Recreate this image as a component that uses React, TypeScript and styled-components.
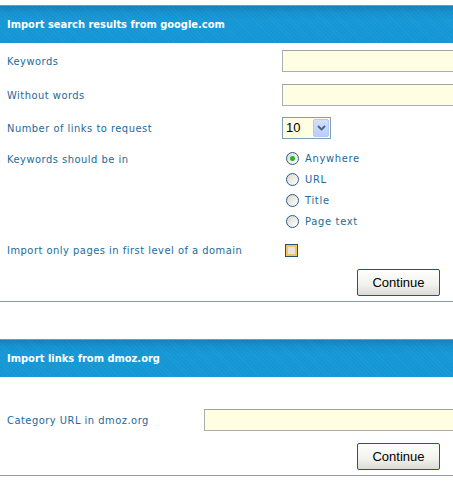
import React from 'react'
import styled, { createGlobalStyle } from 'styled-components'

const GlobalStyle = createGlobalStyle`
  body {
    margin: 0;
    background: #fff;
    overflow: hidden;
  }
`

const linkOptions = ['Anywhere', 'URL', 'Title', 'Page text']

export default function App () {
  return (
    <Page>
      <GlobalStyle />
      <Panel>
        <Header>Import search results from google.com</Header>
        <Body $top={1}>
          <Row $label={275} $h={34}>
            <Label>Keywords</Label>
            <TextInput />
          </Row>
          <Row $label={275} $h={34}>
            <Label>Without words</Label>
            <TextInput />
          </Row>
          <Row $label={275} $h={32}>
            <Label>Number of links to request</Label>
            <SelectBox>
              <SelectValue>10</SelectValue>
              <SelectArrow>
                <svg width='9' height='6' viewBox='0 0 9 6'>
                  <path d='M1 1 L4.5 4.5 L8 1' fill='none' stroke='#4d6185' strokeWidth='1.8' />
                </svg>
              </SelectArrow>
            </SelectBox>
          </Row>
          <Row $label={275} $h={88} $top>
            <Label $pad={5}>Keywords should be in</Label>
            <RadioGroup>
              {linkOptions.map((opt, i) => (
                <RadioOption key={opt}>
                  <Radio $checked={i === 0} />
                  <span>{opt}</span>
                </RadioOption>
              ))}
            </RadioGroup>
          </Row>
          <Row $label={275} $h={36}>
            <Label>Import only pages in first level of a domain</Label>
            <Checkbox />
          </Row>
        </Body>
        <Footer $top={1}>
          <Button>Continue</Button>
        </Footer>
      </Panel>

      <Panel>
        <Header>Import links from dmoz.org</Header>
        <Body $top={26}>
          <Row $label={197} $h={34}>
            <Label>Category URL in dmoz.org</Label>
            <TextInput />
          </Row>
        </Body>
        <Footer $top={6}>
          <Button>Continue</Button>
        </Footer>
      </Panel>
    </Page>
  )
}

const Page = styled.div`
  width: 453px;
  overflow: hidden;
  padding-top: 5px;
`

const Panel = styled.section`
  border-bottom: 1px solid #8d99a6;
  & + & {
    margin-top: 37px;
  }
`

const Header = styled.h2`
  margin: 0;
  height: 37px;
  line-height: 37px;
  padding: 0 7px;
  border-top: 1px solid #8594a3;
  color: #fff;
  font-family: 'DejaVu Sans Condensed', 'DejaVu Sans', Verdana, sans-serif;
  font-size: 11px;
  font-weight: 700;
  white-space: nowrap;
  background:
    repeating-linear-gradient(45deg, rgba(255, 255, 255, 0.035) 0 1px, transparent 1px 3px),
    linear-gradient(#167fbb 0, #1490cd 6px, #1598d5 14px, #1396d3 100%);
`

const Body = styled.div`
  padding-top: ${p => p.$top}px;
`

const Row = styled.div`
  display: grid;
  grid-template-columns: ${p => p.$label}px 1fr;
  align-items: ${p => (p.$top ? 'start' : 'center')};
  height: ${p => p.$h}px;
  padding-left: 7px;
  box-sizing: border-box;
  padding-top: ${p => (p.$top ? '4px' : '0')};
`

const Label = styled.label`
  font-family: Tahoma, 'DejaVu Sans Condensed', 'DejaVu Sans', sans-serif;
  font-size: 11px;
  letter-spacing: 0.5px;
  color: #1b6a9c;
  white-space: nowrap;
  padding-top: ${p => p.$pad || 0}px;
`

const TextInput = styled.input`
  width: 260px;
  height: 22px;
  box-sizing: border-box;
  margin: 0;
  border: 1px solid #a9aeb1;
  border-top-color: #9ea3a6;
  background: #fffde2;
  outline: none;
`

const SelectBox = styled.div`
  display: flex;
  width: 49px;
  height: 22px;
  box-sizing: border-box;
  border: 1px solid #7f9db9;
  background: #fffde2;
  padding: 1px;
`

const SelectValue = styled.span`
  flex: 1;
  font-family: 'Liberation Sans', Arial, sans-serif;
  font-size: 13px;
  line-height: 18px;
  padding-left: 2px;
  color: #000;
`

const SelectArrow = styled.span`
  width: 16px;
  display: flex;
  align-items: center;
  justify-content: center;
  border-radius: 2px;
  background: linear-gradient(#d4e0fd, #b9cdf8);
  border: 1px solid #b4c7f5;
  box-sizing: border-box;
`

const RadioGroup = styled.div`
  display: grid;
  grid-template-rows: repeat(4, 21px);
`

const RadioOption = styled.label`
  display: flex;
  align-items: center;
  gap: 6px;
  padding-left: 4px;
  font-family: Tahoma, 'DejaVu Sans Condensed', 'DejaVu Sans', sans-serif;
  font-size: 11px;
  color: #1b6a9c;
  letter-spacing: 0.7px;
`

const Radio = styled.span`
  width: 13px;
  height: 13px;
  box-sizing: border-box;
  border-radius: 50%;
  border: 1px solid #2d5a86;
  background: ${p =>
    p.$checked
      ? 'radial-gradient(circle, #2fb12f 0 2px, #7fd07f 2.5px, transparent 3px), linear-gradient(135deg, #d8d8d0, #fff)'
      : 'linear-gradient(135deg, #d8d8d0, #fff)'};
`

const Checkbox = styled.span`
  width: 13px;
  height: 13px;
  margin-left: 3px;
  box-sizing: border-box;
  border: 1px solid #1c5180;
  box-shadow: inset 0 0 0 2px #f9c25a;
  background: #e4e4dc;
`

const Footer = styled.div`
  display: flex;
  justify-content: flex-end;
  padding: ${p => p.$top}px 13px 5px 0;
`

const Button = styled.button`
  width: 83px;
  height: 27px;
  margin: 0;
  border: 1px solid #2d4f86;
  border-radius: 2px;
  background: linear-gradient(#ffffff, #f1f1ed 60%, #dcdcd4);
  font-family: 'Liberation Sans', Arial, sans-serif;
  font-size: 13px;
  color: #000;
  padding: 0;
`
